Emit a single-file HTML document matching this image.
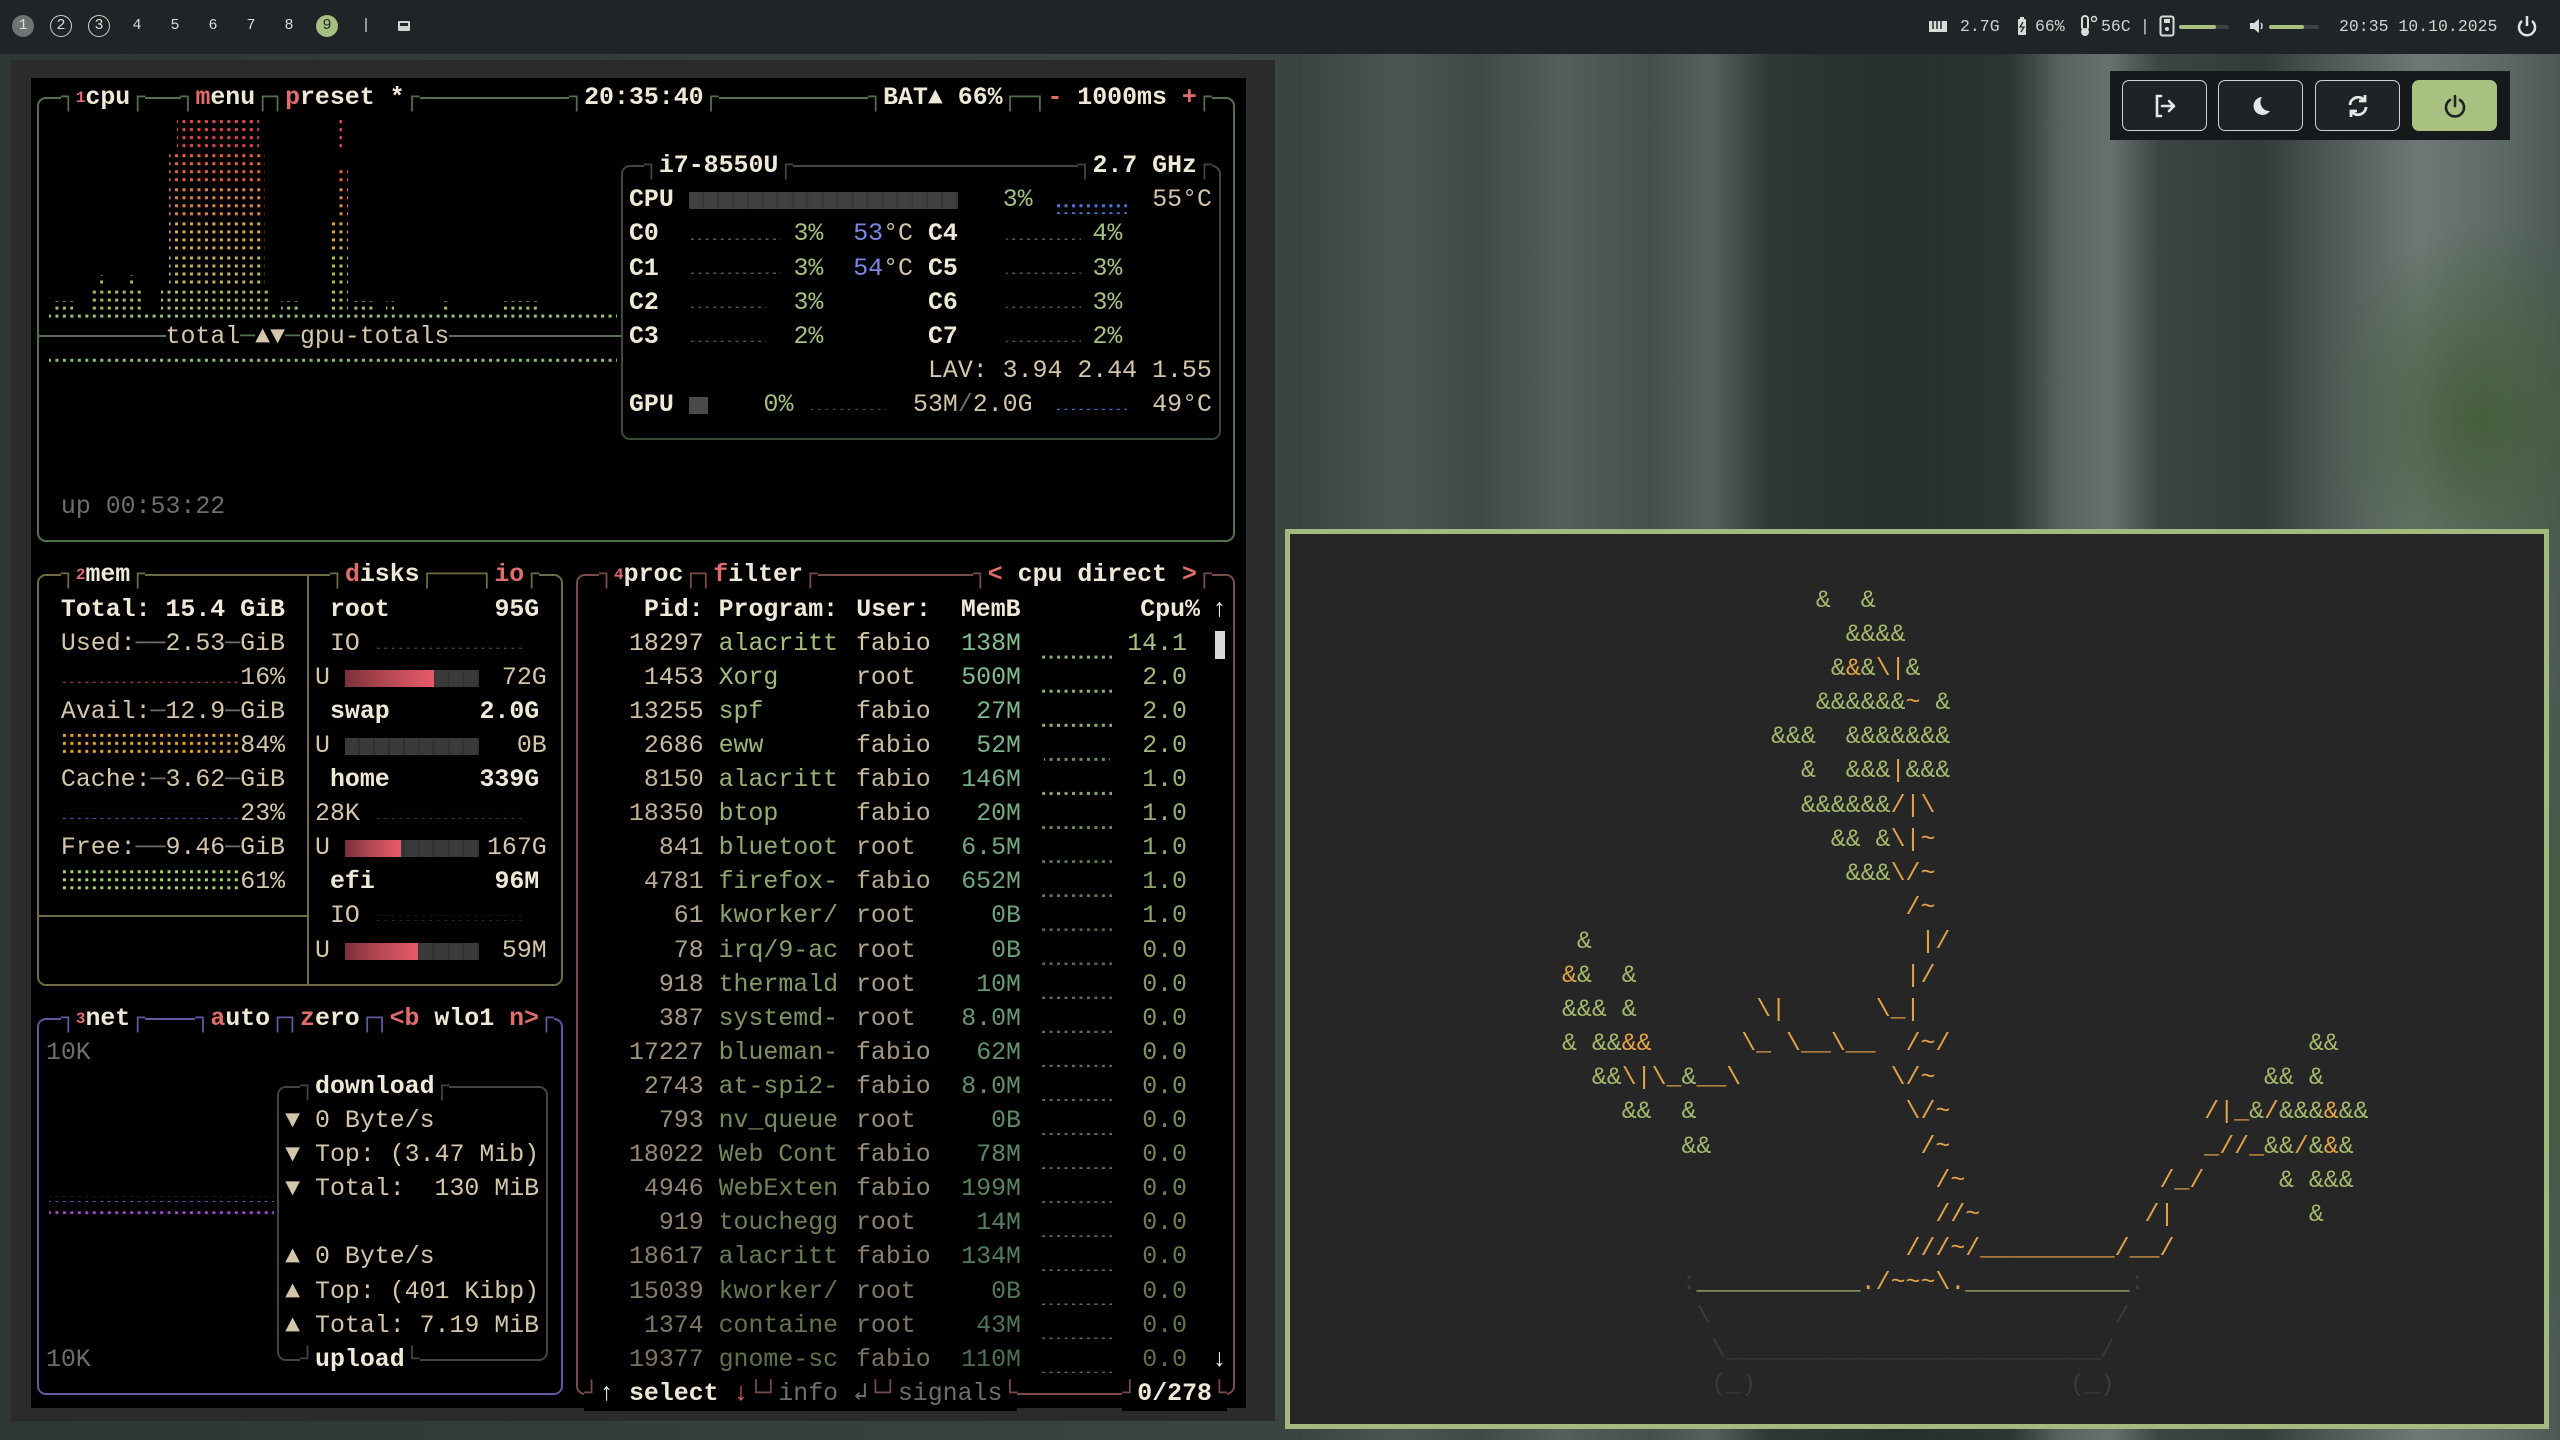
<!DOCTYPE html>
<html><head><meta charset="utf-8">
<style>
*{margin:0;padding:0;box-sizing:content-box}
html,body{width:2560px;height:1440px;overflow:hidden}
body{position:relative;background:
radial-gradient(ellipse 260px 420px at 2420px 1000px,#3f5c34 0%,rgba(63,92,52,0) 100%),
radial-gradient(ellipse 200px 300px at 2250px 1150px,#3d5532 0%,rgba(61,85,50,0) 100%),
radial-gradient(ellipse 160px 200px at 2480px 420px,#455f3c 0%,rgba(69,95,60,0) 100%),
linear-gradient(90deg,#2c3633 0px,#3a4541 1300px,#4a5652 1400px,#3f4a47 1480px,#535f5b 1560px,#45504d 1650px,#56615d 1710px,#2d3734 1770px,#272f2d 1900px,#2b3532 2010px,#56625e 2060px,#66716d 2110px,#3b4643 2160px,#313b38 2260px,#4d5955 2330px,#6e7975 2420px,#5c6965 2500px,#4b5854 2560px);
font-family:"Liberation Mono","DejaVu Sans Mono",monospace}
#bar{position:absolute;left:0;top:0;width:2560px;height:54px;background:#1f2427}
.ws{position:absolute;top:15px;width:22px;height:22px;border-radius:50%;font:15px/22px "Liberation Mono",monospace;text-align:center;color:#d8dcd8}
.bt{position:absolute;top:15px;font:16.5px/24px "Liberation Mono",monospace;color:#cfd3d0;white-space:pre}
#term{position:absolute;left:11px;top:60px;width:1264px;height:1361px;background:#2b2b2b}
#blk{position:absolute;left:31px;top:78px;width:1215px;height:1330px;background:#000}
#t{position:absolute;left:31px;top:81px;width:1215px;height:1327px;font:24.9px/34.1px "Liberation Mono","DejaVu Sans Mono",monospace;color:#d3c6aa}
#t i{position:absolute;font-style:normal;white-space:pre;left:calc(var(--c)*14.95px);top:calc(var(--r)*34.1px)}
#t i u{position:absolute;top:0;text-decoration:none;white-space:pre}
#t u.us{left:227px}
#t u.mm{left:332px;width:60px;text-align:right;color:#83c092}
#t u.cp{left:498px;width:60px;text-align:right;color:#a7c080}
#t .x{background:#000}
.bx{position:absolute;border:2px solid;border-radius:9px;left:calc((var(--a) + .5)*14.95px - 1px);top:calc((var(--r1) + .5)*34.1px - 1px);width:calc((var(--b) - var(--a))*14.95px - 2px);height:calc((var(--r2) - var(--r1))*34.1px - 2px)}
.W{color:#efe9d8;font-weight:bold}
.g{color:#a7c080}.r{color:#e06c6c}.d{color:#6e6e6e}.bl{color:#7d86e6}.m{color:#83c092}
.cb{color:#55704e}.mb{color:#6e6b45}.nb{color:#5f5aa0}.pb{color:#7b4a4a}.ib{color:#3d4a3a}.db{color:#444}
.bar{position:absolute;height:17px;top:calc(var(--r)*34.1px + 9px);left:calc(var(--c)*14.95px);width:calc(var(--w)*14.95px);background:repeating-linear-gradient(90deg,#3a3a3a 0 13px,#303030 13px 14.95px)}
.bar s{display:block;height:100%;background:linear-gradient(90deg,#7a3038,#b84a55,#e85a6a)}
#art{position:absolute;left:1285px;top:529px;width:1254px;height:890px;border:5px solid #a3b97d;background:#262626}
#ap{position:absolute;left:1562px;top:584px;font:24.9px/34.1px "Liberation Mono","DejaVu Sans Mono",monospace;color:#a5b96c;white-space:pre}
#ap o{color:#e2a346}#ap k{color:#3b3b3b}
#pm{position:absolute;left:2110px;top:71px;width:400px;height:69px;background:#15191b}
.pbt{position:absolute;top:9px;width:83px;height:49px;border:1.5px solid #cfd3cf;border-radius:7px;background:#1e2326}
.pbt svg{position:absolute;left:29px;top:12px}
</style></head><body>

<div id="bar">
 <div class="ws" style="left:12px;background:#6f7373">1</div>
 <div class="ws" style="left:50px;border:1.5px solid #d0d4d0;width:20px;height:20px;line-height:20px">2</div>
 <div class="ws" style="left:88px;border:1.5px solid #d0d4d0;width:20px;height:20px;line-height:20px">3</div>
 <div class="ws" style="left:126px">4</div>
 <div class="ws" style="left:164px">5</div>
 <div class="ws" style="left:202px">6</div>
 <div class="ws" style="left:240px">7</div>
 <div class="ws" style="left:278px">8</div>
 <div class="ws" style="left:316px;background:#a7c080;color:#1f2427">9</div>
 <div class="ws" style="left:355px">|</div>
 <div style="position:absolute;left:398px;top:21px;width:12px;height:10px;background:#d0d4d0;border-radius:1px"></div>
 <div style="position:absolute;left:400px;top:23px;width:8px;height:3px;background:#1f2427"></div>

 <svg style="position:absolute;left:1928px;top:19px" width="20" height="14"><rect x="1" y="2" width="18" height="8" fill="#d8dcd8"/><rect x="1" y="10" width="18" height="3" fill="#d8dcd8"/><path d="M5 2v8M9 2v8M13 2v8" stroke="#1f2427" stroke-width="1.5"/></svg>
 <div class="bt" style="left:1960px">2.7G</div>
 <svg style="position:absolute;left:2017px;top:16px" width="10" height="20"><rect x="1" y="3" width="8" height="16" rx="1" fill="#d8dcd8"/><rect x="3" y="1" width="4" height="2" fill="#d8dcd8"/><path d="M6 6L3 11h4l-3 5" stroke="#1f2427" stroke-width="1.3" fill="none"/></svg>
 <div class="bt" style="left:2035px">66%</div>
 <svg style="position:absolute;left:2080px;top:15px" width="20" height="22"><rect x="2" y="1" width="6" height="14" rx="3" fill="none" stroke="#d8dcd8" stroke-width="2"/><circle cx="5" cy="17" r="4" fill="#d8dcd8"/><circle cx="14" cy="4" r="2.5" fill="none" stroke="#d8dcd8" stroke-width="1.5"/></svg>
 <div class="bt" style="left:2101px">56C</div>
 <div class="bt" style="left:2140px">|</div>
 <svg style="position:absolute;left:2159px;top:15px" width="16" height="22"><rect x="1.5" y="1.5" width="13" height="19" rx="2" fill="none" stroke="#d8dcd8" stroke-width="2"/><rect x="5" y="4" width="6" height="4" fill="#d8dcd8"/><circle cx="8" cy="14" r="2" fill="#d8dcd8"/></svg>
 <div style="position:absolute;left:2179px;top:25px;width:50px;height:4px;background:#3c4144;border-radius:2px"><div style="width:37px;height:4px;background:#a7c080;border-radius:2px"></div></div>
 <svg style="position:absolute;left:2249px;top:18px" width="16" height="16"><path d="M1 5h4l5-4v14l-5-4H1z" fill="#d8dcd8"/><path d="M12 5q2 3 0 6" stroke="#d8dcd8" stroke-width="1.5" fill="none"/></svg>
 <div style="position:absolute;left:2269px;top:25px;width:50px;height:4px;background:#3c4144;border-radius:2px"><div style="width:35px;height:4px;background:#a7c080;border-radius:2px"></div></div>
 <div class="bt" style="left:2339px">20:35 10.10.2025</div>
 <svg style="position:absolute;left:2517px;top:14px" width="20" height="24"><path d="M5 7a8 8 0 1 0 10 0" stroke="#e0e4e0" stroke-width="2.5" fill="none"/><path d="M10 2v10" stroke="#e0e4e0" stroke-width="2.5"/></svg>
</div>

<div id="pm">
 <div class="pbt" style="left:12px"><svg width="26" height="26" viewBox="0 0 26 26"><path d="M9 3H5v20h4" stroke="#e6e6e6" stroke-width="2.6" fill="none" stroke-linecap="round"/><path d="M10 13h12M17 8l5 5-5 5" stroke="#e6e6e6" stroke-width="2.6" fill="none" stroke-linecap="round" stroke-linejoin="round"/></svg></div>
 <div class="pbt" style="left:108px"><svg width="26" height="26" viewBox="0 0 26 26"><path d="M14 4a9 9 0 1 0 8 14a9 9 0 0 1-8-14z" fill="#e6e6e6"/></svg></div>
 <div class="pbt" style="left:205px"><svg width="26" height="26" viewBox="0 0 26 26"><path d="M5 12a8 8 0 0 1 14-5M21 14a8 8 0 0 1-14 5" stroke="#e6e6e6" stroke-width="2.8" fill="none"/><path d="M20 2v6h-6M6 24v-6h6" stroke="#e6e6e6" stroke-width="2.8" fill="none"/></svg></div>
 <div class="pbt" style="left:302px;background:#a8c080;border-color:#a8c080"><svg width="26" height="26" viewBox="0 0 26 26"><path d="M8 7a9 9 0 1 0 10 0" stroke="#1f2427" stroke-width="2.6" fill="none" stroke-linecap="round"/><path d="M13 3v10" stroke="#1f2427" stroke-width="2.6" stroke-linecap="round"/></svg></div>
</div>

<div id="term"></div>
<div id="blk"></div>
<div id="t">
<div class="bx" style="--a:0;--b:80;--r1:0;--r2:13;border-color:#55704e"></div>
<div style="position:absolute;left:8px;top:254px;width:583px;height:2px;background:#55704e"></div>
<div class="bx" style="--a:39;--b:79;--r1:2;--r2:10;border-color:#3d4a3a;background:#000"></div>
<div class="bx" style="--a:0;--b:35;--r1:14;--r2:26;border-color:#6e6b45"></div>
<div style="position:absolute;left:276px;top:494px;width:2px;height:409px;background:#6e6b45"></div>
<div style="position:absolute;left:8px;top:834px;width:270px;height:2px;background:#6e6b45"></div>
<div class="bx" style="--a:0;--b:35;--r1:27;--r2:38;border-color:#5f5aa0"></div>
<div class="bx" style="--a:16;--b:34;--r1:29;--r2:37;border-color:#444"></div>
<div class="bx" style="--a:36;--b:80;--r1:14;--r2:38;border-color:#7b4a4a"></div>

<svg style="position:absolute;left:0;top:0" width="1215" height="1327">
<defs>
<pattern id="pd" width="7.475" height="34.1" patternUnits="userSpaceOnUse"><rect x="2" y="5" width="3" height="3" fill="#fff"/><rect x="2" y="13" width="3" height="3" fill="#fff"/><rect x="2" y="21" width="3" height="3" fill="#fff"/><rect x="2" y="29" width="3" height="3" fill="#fff"/></pattern>
<mask id="md" maskUnits="userSpaceOnUse" x="0" y="0" width="1215" height="1327"><rect width="1215" height="1327" fill="url(#pd)"/></mask>
</defs>
<g mask="url(#md)">
<rect x="146" y="34" width="82" height="34" fill="#e04b4b"/>
<rect x="305" y="34" width="6" height="34" fill="#e04b4b"/>
<rect x="138" y="68" width="96" height="34" fill="#e2643f"/>
<rect x="305" y="86" width="12" height="16" fill="#e2643f"/>
<rect x="138" y="102" width="96" height="34" fill="#e2873f"/>
<rect x="305" y="102" width="12" height="34" fill="#e2873f"/>
<rect x="138" y="136" width="96" height="34" fill="#d6a744"/>
<rect x="298" y="136" width="19" height="34" fill="#d6a744"/>
<rect x="138" y="170" width="96" height="34" fill="#c0b752"/>
<rect x="298" y="170" width="19" height="34" fill="#c0b752"/>
<rect x="66" y="194" width="6" height="10" fill="#b8bc58"/><rect x="96" y="194" width="6" height="10" fill="#b8bc58"/>
<rect x="60" y="204" width="50" height="30" fill="#a8be62"/>
<rect x="130" y="204" width="110" height="30" fill="#a8be62"/>
<rect x="298" y="204" width="19" height="30" fill="#a8be62"/>
<rect x="20" y="220" width="22" height="10" fill="#9fc06c"/><rect x="250" y="220" width="18" height="10" fill="#9fc06c"/><rect x="320" y="220" width="24" height="10" fill="#9fc06c"/><rect x="355" y="220" width="8" height="10" fill="#9fc06c"/><rect x="410" y="220" width="8" height="10" fill="#9fc06c"/><rect x="470" y="220" width="40" height="10" fill="#9fc06c"/>
<rect x="18" y="232" width="568" height="6" fill="#9cc27a"/>
<rect x="18" y="276" width="568" height="6" fill="#8fc17a"/>
<rect x="1024" y="119" width="72" height="14" fill="#4a78d8"/>
<rect x="660" y="153" width="90" height="6" fill="#4d5c48"/><rect x="975" y="153" width="75" height="6" fill="#4d5c48"/>
<rect x="660" y="187" width="90" height="6" fill="#4d5c48"/><rect x="975" y="187" width="75" height="6" fill="#4d5c48"/>
<rect x="660" y="221" width="75" height="6" fill="#4d5c48"/><rect x="975" y="221" width="75" height="6" fill="#4d5c48"/>
<rect x="660" y="255" width="75" height="6" fill="#4d5c48"/><rect x="975" y="255" width="75" height="6" fill="#4d5c48"/>
<rect x="780" y="323" width="75" height="6" fill="#4a4a4a"/><rect x="1024" y="323" width="72" height="6" fill="#4a78d8"/>
<rect x="30" y="596" width="180" height="6" fill="#9a3f3f"/>
<rect x="30" y="650" width="180" height="26" fill="#e8a82c"/>
<rect x="30" y="732" width="180" height="6" fill="#4b6fc0"/>
<rect x="30" y="786" width="180" height="26" fill="#a8d060"/>
<rect x="344" y="562" width="150" height="6" fill="#3e3e3e"/>
<rect x="344" y="732" width="150" height="6" fill="#3e3e3e"/>
<rect x="344" y="834" width="150" height="6" fill="#3e3e3e"/>
<rect x="18" y="1115" width="225" height="6" fill="#6a78d8"/>
<rect x="18" y="1127" width="225" height="6" fill="#a04ac8"/>
<g fill="#8fb07a">
<rect x="1009" y="572" width="72" height="6"/><rect x="1009" y="606" width="72" height="6"/><rect x="1009" y="640" width="72" height="6"/><rect x="1013" y="674" width="66" height="6" opacity=".8"/><rect x="1009" y="708" width="72" height="6"/><rect x="1009" y="742" width="72" height="6" opacity=".8"/><rect x="1009" y="776" width="72" height="6" opacity=".7"/><rect x="1009" y="810" width="72" height="6" opacity=".7"/><rect x="1009" y="844" width="72" height="6" opacity=".6"/><rect x="1009" y="878" width="72" height="6" opacity=".6"/>
</g>
<g fill="#5c6e56">
<rect x="1009" y="912" width="72" height="6"/><rect x="1009" y="946" width="72" height="6"/><rect x="1009" y="980" width="72" height="6"/><rect x="1009" y="1014" width="72" height="6"/><rect x="1009" y="1048" width="72" height="6"/><rect x="1009" y="1082" width="72" height="6"/><rect x="1009" y="1116" width="72" height="6"/><rect x="1009" y="1150" width="72" height="6"/><rect x="1009" y="1184" width="72" height="6"/><rect x="1009" y="1218" width="72" height="6"/><rect x="1009" y="1252" width="72" height="6"/><rect x="1009" y="1286" width="72" height="6"/>
</g>
</g>
</svg>

<i class="x W" style="--c:2;--r:0"><span class="cb">┐</span><span class="r" style="font-size:16px;vertical-align:top">1</span>cpu<span class="cb">┌</span></i>
<i class="x W" style="--c:10;--r:0"><span class="cb">┐</span><span class="r">m</span>enu<span class="cb">┌┐</span><span class="r">p</span>reset *<span class="cb">┌</span></i>
<i class="x W" style="--c:36;--r:0"><span class="cb">┐</span>20:35:40<span class="cb">┌</span></i>
<i class="x W" style="--c:56;--r:0"><span class="cb">┐</span>BAT▲ 66%<span class="cb">┌─┐</span><span class="r">-</span> 1000ms <span class="r">+</span><span class="cb">┌</span></i>
<i class="x W" style="--c:41;--r:2"><span class="ib">┐</span>i7-8550U<span class="ib">┌</span></i>
<i class="x W" style="--c:70;--r:2"><span class="ib">┐</span>2.7 GHz<span class="ib">┌</span></i>
<i class="W" style="--c:40;--r:3">CPU</i>
<div class="bar" style="--c:44;--r:3;--w:18;background:repeating-linear-gradient(90deg,#404040 0 13px,#363636 13px 14.95px)"></div>
<i class="g" style="--c:65;--r:3">3%</i><i style="--c:75;--r:3">55°C</i>
<i class="W" style="--c:40;--r:4">C0</i><i class="g" style="--c:51;--r:4">3%</i><i style="--c:55;--r:4"><span class="bl">53</span>°C</i><i class="W" style="--c:60;--r:4">C4</i><i class="g" style="--c:71;--r:4">4%</i>
<i class="W" style="--c:40;--r:5">C1</i><i class="g" style="--c:51;--r:5">3%</i><i style="--c:55;--r:5"><span class="bl">54</span>°C</i><i class="W" style="--c:60;--r:5">C5</i><i class="g" style="--c:71;--r:5">3%</i>
<i class="W" style="--c:40;--r:6">C2</i><i class="g" style="--c:51;--r:6">3%</i><i class="W" style="--c:60;--r:6">C6</i><i class="g" style="--c:71;--r:6">3%</i>
<i class="W" style="--c:40;--r:7">C3</i><i class="g" style="--c:51;--r:7">2%</i><i class="W" style="--c:60;--r:7">C7</i><i class="g" style="--c:71;--r:7">2%</i>
<i style="--c:60;--r:8">LAV: 3.94 2.44 1.55</i>
<i class="W" style="--c:40;--r:9">GPU</i>
<div class="bar" style="--c:44;--r:9;--w:1.3;background:#4a4a4a"></div>
<i class="g" style="--c:49;--r:9">0%</i><i style="--c:59;--r:9">53M<span class="d">/</span>2.0G</i><i style="--c:75;--r:9">49°C</i>
<i class="x" style="--c:9;--r:7">total<span class="cb">─</span>▲▼<span class="cb">─</span>gpu-totals</i>
<i class="d" style="--c:2;--r:12">up 00:53:22</i>

<i class="x W" style="--c:2;--r:14"><span class="mb">┐</span><span class="r" style="font-size:16px;vertical-align:top">2</span>mem<span class="mb">┌</span></i>
<i class="x W" style="--c:20;--r:14"><span class="mb">┐</span><span class="r">d</span>isks<span class="mb">┌───┐</span><span class="r">io</span><span class="mb">┌</span></i>
<i class="W" style="--c:2;--r:15">Total: 15.4 GiB</i>
<i style="--c:2;--r:16">Used:<span class="d">──</span>2.53<span class="d">─</span>GiB</i><i style="--c:14;--r:17">16%</i>
<i style="--c:2;--r:18">Avail:<span class="d">─</span>12.9<span class="d">─</span>GiB</i><i style="--c:14;--r:19">84%</i>
<i style="--c:2;--r:20">Cache:<span class="d">─</span>3.62<span class="d">─</span>GiB</i><i style="--c:14;--r:21">23%</i>
<i style="--c:2;--r:22">Free:<span class="d">──</span>9.46<span class="d">─</span>GiB</i><i style="--c:14;--r:23">61%</i>
<i class="W" style="--c:20;--r:15">root</i><i class="W" style="--c:31;--r:15">95G</i>
<i style="--c:20;--r:16">IO</i>
<i style="--c:19;--r:17">U</i><div class="bar" style="--c:21;--r:17;--w:9"><s style="width:66%"></s></div><i style="--c:31.5;--r:17">72G</i>
<i class="W" style="--c:20;--r:18">swap</i><i class="W" style="--c:30;--r:18">2.0G</i>
<i style="--c:19;--r:19">U</i><div class="bar" style="--c:21;--r:19;--w:9"></div><i style="--c:32.5;--r:19">0B</i>
<i class="W" style="--c:20;--r:20">home</i><i class="W" style="--c:30;--r:20">339G</i>
<i style="--c:19;--r:21">28K</i>
<i style="--c:19;--r:22">U</i><div class="bar" style="--c:21;--r:22;--w:9"><s style="width:42%"></s></div><i style="--c:30.5;--r:22">167G</i>
<i class="W" style="--c:20;--r:23">efi</i><i class="W" style="--c:31;--r:23">96M</i>
<i style="--c:20;--r:24">IO</i>
<i style="--c:19;--r:25">U</i><div class="bar" style="--c:21;--r:25;--w:9"><s style="width:54%"></s></div><i style="--c:31.5;--r:25">59M</i>

<i class="x W" style="--c:2;--r:27"><span class="nb">┐</span><span class="r" style="font-size:16px;vertical-align:top">3</span>net<span class="nb">┌</span></i>
<i class="x W" style="--c:11;--r:27"><span class="nb">┐</span><span class="r">a</span>uto<span class="nb">┌┐</span><span class="r">z</span>ero<span class="nb">┌┐</span><span class="r">&lt;b</span> wlo1 <span class="r">n&gt;</span><span class="nb">┌</span></i>
<i class="d" style="--c:1;--r:28">10K</i><i class="d" style="--c:1;--r:37">10K</i>
<i class="x W" style="--c:18;--r:29"><span class="db">┐</span>download<span class="db">┌</span></i>
<i style="--c:17;--r:30">▼ 0 Byte/s</i>
<i style="--c:17;--r:31">▼ Top: (3.47 Mib)</i>
<i style="--c:17;--r:32">▼ Total:  130 MiB</i>
<i style="--c:17;--r:34">▲ 0 Byte/s</i>
<i style="--c:17;--r:35">▲ Top: (401 Kibp)</i>
<i style="--c:17;--r:36">▲ Total: 7.19 MiB</i>
<i class="x W" style="--c:18;--r:37"><span class="db">┘</span>upload<span class="db">└</span></i>

<i class="x W" style="--c:38;--r:14"><span class="pb">┐</span><span class="r" style="font-size:16px;vertical-align:top">4</span>proc<span class="pb">┌┐</span><span class="r">f</span>ilter<span class="pb">┌</span></i>
<i class="x W" style="--c:63;--r:14"><span class="pb">┐</span><span class="r">&lt;</span> cpu direct <span class="r">&gt;</span><span class="pb">┌</span></i>
<i class="W" style="--c:41;--r:15">Pid: Program:</i><i class="W" style="--c:55.2;--r:15">User:</i><i class="W" style="--c:62.2;--r:15">MemB</i><i class="W" style="--c:74.2;--r:15">Cpu%</i><i class="W" style="--c:79;--r:15">↑</i>
<i style="--c:40;--r:16">18297 <span class="g">alacritt</span><u class="us">fabio</u><u class="mm">138M</u><u class="cp">14.1</u></i>
<i style="--c:40;--r:17;opacity:.98"> 1453 <span class="g">Xorg</span><u class="us">root</u><u class="mm">500M</u><u class="cp">2.0</u></i>
<i style="--c:40;--r:18;opacity:.96">13255 <span class="g">spf</span><u class="us">fabio</u><u class="mm">27M</u><u class="cp">2.0</u></i>
<i style="--c:40;--r:19;opacity:.94"> 2686 <span class="g">eww</span><u class="us">fabio</u><u class="mm">52M</u><u class="cp">2.0</u></i>
<i style="--c:40;--r:20;opacity:.92"> 8150 <span class="g">alacritt</span><u class="us">fabio</u><u class="mm">146M</u><u class="cp">1.0</u></i>
<i style="--c:40;--r:21;opacity:.9">18350 <span class="g">btop</span><u class="us">fabio</u><u class="mm">20M</u><u class="cp">1.0</u></i>
<i style="--c:40;--r:22;opacity:.88">  841 <span class="g">bluetoot</span><u class="us">root</u><u class="mm">6.5M</u><u class="cp">1.0</u></i>
<i style="--c:40;--r:23;opacity:.86"> 4781 <span class="g">firefox-</span><u class="us">fabio</u><u class="mm">652M</u><u class="cp">1.0</u></i>
<i style="--c:40;--r:24;opacity:.84">   61 <span class="g">kworker/</span><u class="us">root</u><u class="mm">0B</u><u class="cp">1.0</u></i>
<i style="--c:40;--r:25;opacity:.82">   78 <span class="g">irq/9-ac</span><u class="us">root</u><u class="mm">0B</u><u class="cp">0.0</u></i>
<i style="--c:40;--r:26;opacity:.8">  918 <span class="g">thermald</span><u class="us">root</u><u class="mm">10M</u><u class="cp">0.0</u></i>
<i style="--c:40;--r:27;opacity:.78">  387 <span class="g">systemd-</span><u class="us">root</u><u class="mm">8.0M</u><u class="cp">0.0</u></i>
<i style="--c:40;--r:28;opacity:.76">17227 <span class="g">blueman-</span><u class="us">fabio</u><u class="mm">62M</u><u class="cp">0.0</u></i>
<i style="--c:40;--r:29;opacity:.74"> 2743 <span class="g">at-spi2-</span><u class="us">fabio</u><u class="mm">8.0M</u><u class="cp">0.0</u></i>
<i style="--c:40;--r:30;opacity:.72">  793 <span class="g">nv_queue</span><u class="us">root</u><u class="mm">0B</u><u class="cp">0.0</u></i>
<i style="--c:40;--r:31;opacity:.7">18022 <span class="g">Web Cont</span><u class="us">fabio</u><u class="mm">78M</u><u class="cp">0.0</u></i>
<i style="--c:40;--r:32;opacity:.68"> 4946 <span class="g">WebExten</span><u class="us">fabio</u><u class="mm">199M</u><u class="cp">0.0</u></i>
<i style="--c:40;--r:33;opacity:.66">  919 <span class="g">touchegg</span><u class="us">root</u><u class="mm">14M</u><u class="cp">0.0</u></i>
<i style="--c:40;--r:34;opacity:.64">18617 <span class="g">alacritt</span><u class="us">fabio</u><u class="mm">134M</u><u class="cp">0.0</u></i>
<i style="--c:40;--r:35;opacity:.62">15039 <span class="g">kworker/</span><u class="us">root</u><u class="mm">0B</u><u class="cp">0.0</u></i>
<i style="--c:40;--r:36;opacity:.6"> 1374 <span class="g">containe</span><u class="us">root</u><u class="mm">43M</u><u class="cp">0.0</u></i>
<i style="--c:40;--r:37;opacity:.58">19377 <span class="g">gnome-sc</span><u class="us">fabio</u><u class="mm">110M</u><u class="cp">0.0</u></i>
<div style="position:absolute;left:1184px;top:550px;width:10px;height:28px;background:#d8d8d8"></div>
<i class="W" style="--c:79;--r:37">↓</i>
<i class="x" style="--c:37;--r:38"><span class="pb">┘</span><b class="W">↑ select </b><span class="r">↓</span><span class="pb">└┘</span><span class="d">info ↲</span><span class="pb">└┘</span><span class="d">signals</span><span class="pb">└</span></i>
<i class="x W" style="--c:73;--r:38"><span class="pb">┘</span>0/278<span class="pb">└</span></i>
</div>

<div id="art"></div>
<div id="ap">                 &amp;  &amp;
                   &amp;&amp;&amp;&amp;
                  &amp;<o>&amp;</o>&amp;<o>\|</o>&amp;
                 &amp;&amp;&amp;&amp;&amp;&amp;<o>~</o> &amp;
              &amp;&amp;&amp;  &amp;&amp;&amp;&amp;&amp;&amp;&amp;
                &amp;  &amp;&amp;&amp;<o>|</o>&amp;&amp;&amp;
                &amp;&amp;&amp;&amp;&amp;&amp;<o>/|\</o>
                  &amp;&amp; &amp;<o>\|~</o>
                   &amp;&amp;&amp;<o>\/~</o>
                       <o>/~</o>
 &amp;                      <o>|/</o>
<o>&amp;</o>&amp;  &amp;                  <o>|/</o>
&amp;&amp;&amp; &amp;        <o>\|</o>      <o>\_|</o>
&amp; &amp;&amp;<o>&amp;&amp;</o>      <o>\_ \__\__</o>  <o>/~/</o>                        &amp;&amp;
  &amp;&amp;<o>\|\_</o>&amp;<o>__\</o>          <o>\/~</o>                      &amp;&amp; &amp;
    &amp;&amp;  &amp;              <o>\/~</o>                 <o>/|_</o>&amp;<o>/</o>&amp;&amp;&amp;<o>&amp;</o>&amp;&amp;
        &amp;&amp;              <o>/~</o>                 <o>_//_</o>&amp;&amp;<o>/</o>&amp;<o>&amp;</o>&amp;
                         <o>/~</o>             <o>/_/</o>     &amp; &amp;&amp;&amp;
                         <o>//~</o>           <o>/|</o>         &amp;
                       <o>///~/_________/__/</o>
        <k>:</k>___________<o>./~~~\.</o>___________<k>:</k>
<k>         \                           /</k>
<k>          \_________________________/</k>
<k>          (_)                     (_)</k></div>
</body></html>
